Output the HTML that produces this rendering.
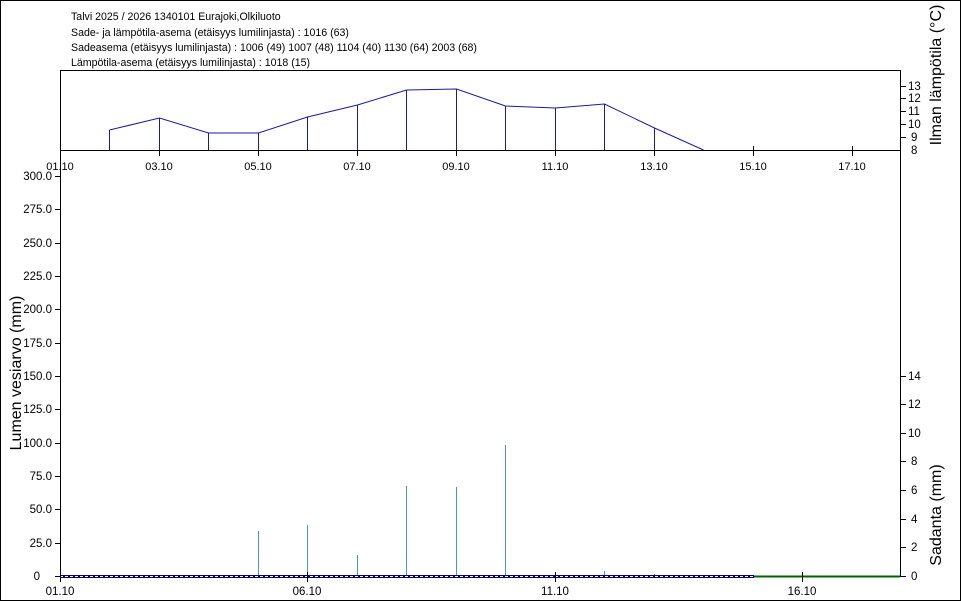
<!DOCTYPE html>
<html><head><meta charset="utf-8"><style>
html,body{margin:0;padding:0;background:#fff;}
svg{display:block;font-family:"Liberation Sans",sans-serif;}
</style></head><body>
<svg width="961" height="601" viewBox="0 0 961 601" xmlns="http://www.w3.org/2000/svg">
<rect x="0.5" y="0.5" width="960" height="600" fill="#fff" stroke="#000"/>
<g font-size="10.6" fill="#000">
<text x="71" y="20">Talvi 2025 / 2026 1340101 Eurajoki,Olkiluoto</text>
<text x="71" y="36">Sade- ja lämpötila-asema (etäisyys lumilinjasta) :  1016 (63)</text>
<text x="71" y="51">Sadeasema (etäisyys lumilinjasta) :  1006 (49) 1007 (48) 1104 (40) 1130 (64) 2003 (68)</text>
<text x="71" y="66">Lämpötila-asema (etäisyys lumilinjasta) :  1018 (15)</text>
</g>
<g stroke="#000" fill="none" shape-rendering="crispEdges">
<line x1="60" y1="70.5" x2="901" y2="70.5"/>
<line x1="60.5" y1="70" x2="60.5" y2="577"/>
<line x1="900.5" y1="70" x2="900.5" y2="577"/>
<line x1="60" y1="150.5" x2="900" y2="150.5"/>
<line x1="60" y1="576.5" x2="900" y2="576.5"/>
</g>
<g stroke="#000" shape-rendering="crispEdges">
<line x1="60.5" y1="146" x2="60.5" y2="156"/><line x1="159.5" y1="146" x2="159.5" y2="156"/><line x1="258.5" y1="146" x2="258.5" y2="156"/><line x1="357.5" y1="146" x2="357.5" y2="156"/><line x1="456.5" y1="146" x2="456.5" y2="156"/><line x1="555.5" y1="146" x2="555.5" y2="156"/><line x1="654.5" y1="146" x2="654.5" y2="156"/><line x1="753.5" y1="146" x2="753.5" y2="156"/><line x1="852.5" y1="146" x2="852.5" y2="156"/>
</g>
<g font-size="11" text-anchor="middle">
<text x="60" y="170">01.10</text><text x="159" y="170">03.10</text><text x="258" y="170">05.10</text><text x="357" y="170">07.10</text><text x="456" y="170">09.10</text><text x="555" y="170">11.10</text><text x="654" y="170">13.10</text><text x="753" y="170">15.10</text><text x="852" y="170">17.10</text>
</g>
<g stroke="#000" shape-rendering="crispEdges">
<line x1="900" y1="86.5" x2="906" y2="86.5"/><line x1="900" y1="98.5" x2="906" y2="98.5"/><line x1="900" y1="111.5" x2="906" y2="111.5"/><line x1="900" y1="124.5" x2="906" y2="124.5"/><line x1="900" y1="137.5" x2="906" y2="137.5"/>
</g>
<g font-size="11.5">
<text x="908" y="90">13</text><text x="908" y="102">12</text><text x="908" y="115">11</text><text x="908" y="128">10</text><text x="911" y="141">9</text><text x="911" y="154">8</text>
</g>
<text transform="translate(941,75) rotate(-90)" font-size="16" text-anchor="middle">Ilman lämpötila (°C)</text>
<g stroke="#1a1a9a" fill="none">
<polyline points="109.5,130 159.5,118 208.5,133 258.5,133 307.5,117 357.5,105 406.5,90 456.5,89 505.5,106 555.5,108 604.5,104 654.5,128 703.5,150"/>
<path d="M109.5 130V150M159.5 118V150M208.5 133V150M258.5 133V150M307.5 117V150M357.5 105V150M406.5 90V150M456.5 89V150M505.5 106V150M555.5 108V150M604.5 104V150M654.5 128V150" shape-rendering="crispEdges"/>
</g>
<g stroke="#000" shape-rendering="crispEdges">
<line x1="55" y1="176.5" x2="60" y2="176.5"/><line x1="55" y1="209.5" x2="60" y2="209.5"/><line x1="55" y1="243.5" x2="60" y2="243.5"/><line x1="55" y1="276.5" x2="60" y2="276.5"/><line x1="55" y1="309.5" x2="60" y2="309.5"/><line x1="55" y1="343.5" x2="60" y2="343.5"/><line x1="55" y1="376.5" x2="60" y2="376.5"/><line x1="55" y1="409.5" x2="60" y2="409.5"/><line x1="55" y1="443.5" x2="60" y2="443.5"/><line x1="55" y1="476.5" x2="60" y2="476.5"/><line x1="55" y1="509.5" x2="60" y2="509.5"/><line x1="55" y1="543.5" x2="60" y2="543.5"/><line x1="55" y1="576.5" x2="60" y2="576.5"/>
</g>
<g font-size="11.5" text-anchor="end">
<text x="52" y="180">300.0</text><text x="52" y="213">275.0</text><text x="52" y="247">250.0</text><text x="52" y="280">225.0</text><text x="52" y="313">200.0</text><text x="52" y="347">175.0</text><text x="52" y="380">150.0</text><text x="52" y="413">125.0</text><text x="52" y="447">100.0</text><text x="52" y="480">75.0</text><text x="52" y="513">50.0</text><text x="52" y="547">25.0</text><text x="40" y="580">0</text>
</g>
<text transform="translate(21,373) rotate(-90)" font-size="16" text-anchor="middle">Lumen vesiarvo (mm)</text>
<g stroke="#000" shape-rendering="crispEdges">
<line x1="900" y1="376.5" x2="906" y2="376.5"/><line x1="900" y1="404.5" x2="906" y2="404.5"/><line x1="900" y1="433.5" x2="906" y2="433.5"/><line x1="900" y1="461.5" x2="906" y2="461.5"/><line x1="900" y1="490.5" x2="906" y2="490.5"/><line x1="900" y1="519.5" x2="906" y2="519.5"/><line x1="900" y1="547.5" x2="906" y2="547.5"/><line x1="900" y1="576.5" x2="906" y2="576.5"/>
</g>
<g font-size="11.5">
<text x="908" y="380">14</text><text x="908" y="408">12</text><text x="908" y="437">10</text><text x="911" y="465">8</text><text x="911" y="494">6</text><text x="911" y="523">4</text><text x="911" y="551">2</text><text x="911" y="580">0</text>
</g>
<text transform="translate(941,515) rotate(-90)" font-size="16" text-anchor="middle">Sadanta (mm)</text>
<path d="M258.5 531V576M307.5 525V576M357.5 555V576M406.5 486V576M456.5 487V576M505.5 445V576M604.5 571V576M654.5 574V576" stroke="#4a90e2" shape-rendering="crispEdges"/>
<rect x="60" y="575" width="694" height="3" fill="#000080"/>
<line x1="60" y1="576.5" x2="754" y2="576.5" stroke="#fff" stroke-dasharray="3,2" shape-rendering="crispEdges"/>
<line x1="754" y1="576.5" x2="900" y2="576.5" stroke="#006400" stroke-width="2"/>
<g stroke="#000" shape-rendering="crispEdges">
<line x1="60.5" y1="572" x2="60.5" y2="582"/><line x1="307.5" y1="572" x2="307.5" y2="582"/><line x1="555.5" y1="572" x2="555.5" y2="582"/><line x1="802.5" y1="572" x2="802.5" y2="582"/>
</g>
<g font-size="11.5" text-anchor="middle">
<text x="60" y="595">01.10</text><text x="307" y="595">06.10</text><text x="555" y="595">11.10</text><text x="802" y="595">16.10</text>
</g>
</svg>
</body></html>
